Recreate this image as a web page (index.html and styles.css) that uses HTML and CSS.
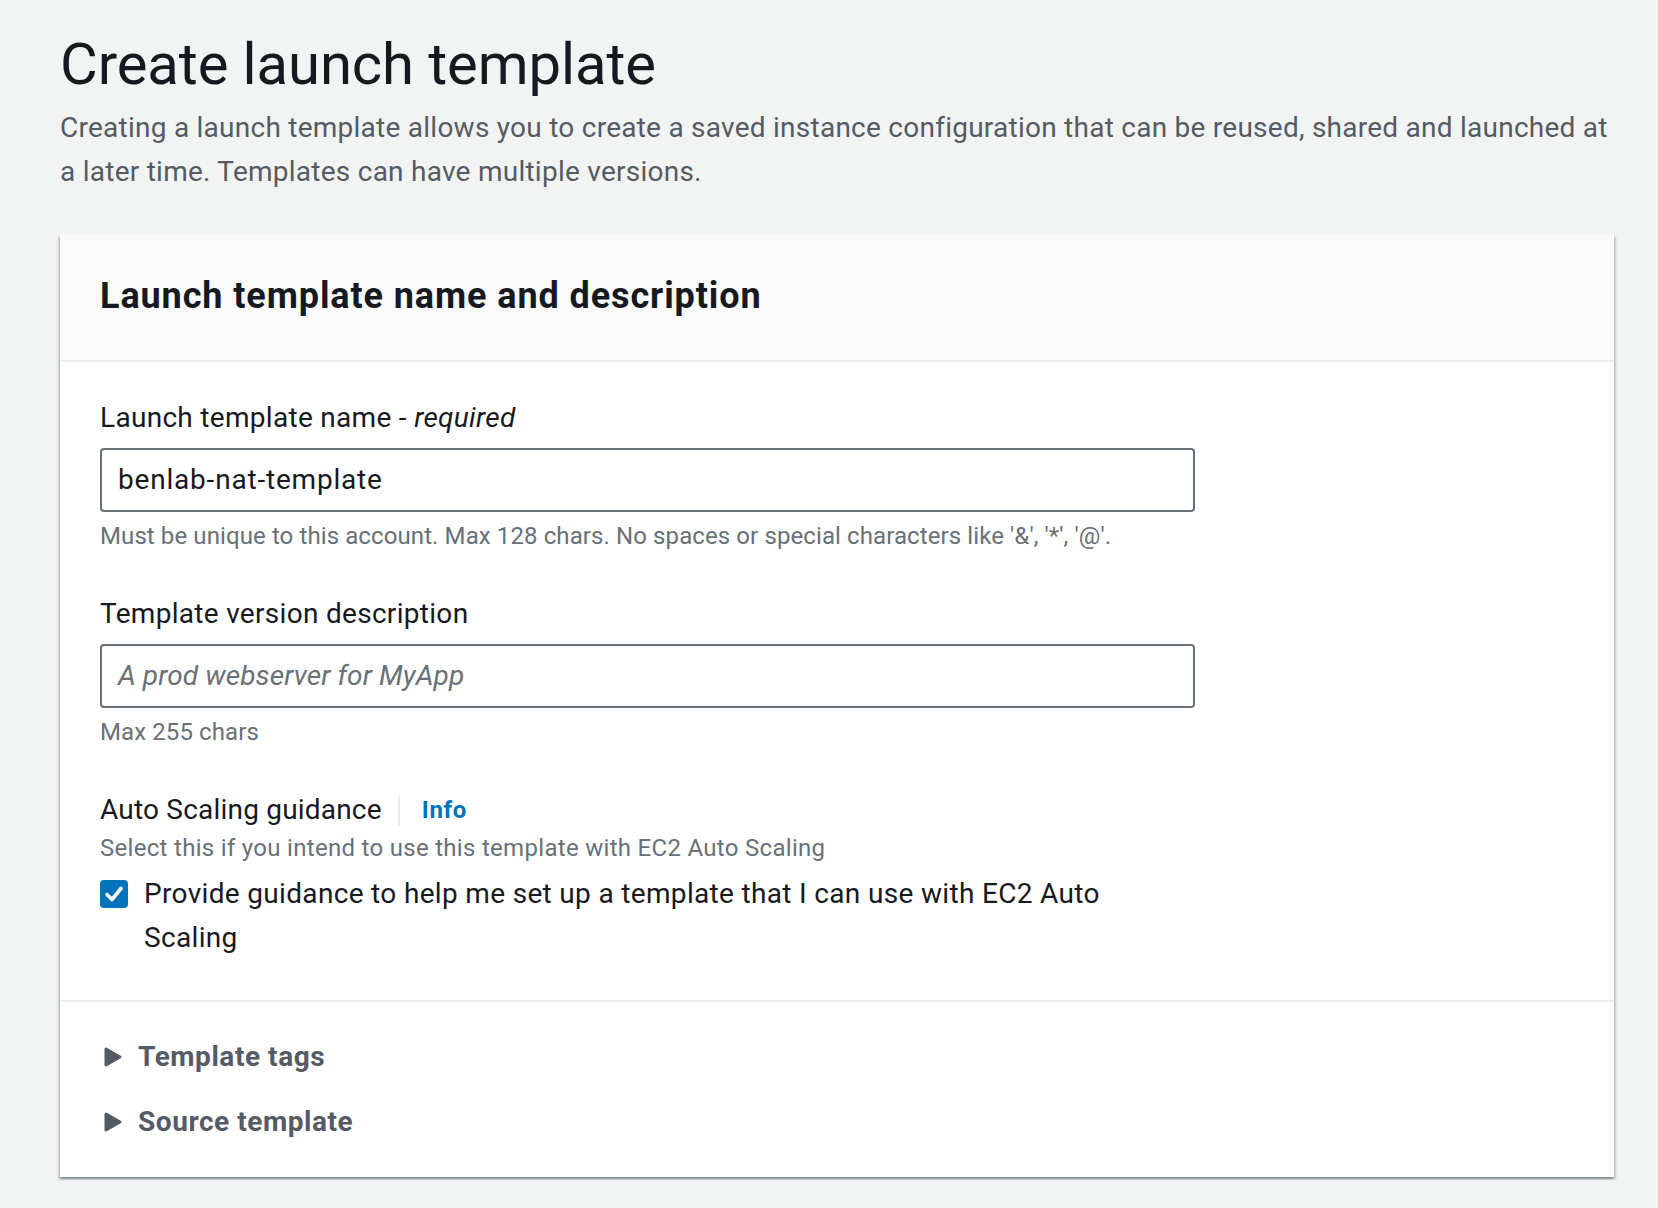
FILE: index.html
```
<!DOCTYPE html>
<html lang="en">
<head>
<meta charset="utf-8">
<title>Create launch template</title>
<link rel="stylesheet" href="styles.css">
</head>
<body>
<main class="page">
  <header class="page-header">
    <h1 class="page-title">Create launch template</h1>
    <p class="page-desc">Creating a launch template allows you to create a saved instance configuration that can be reused, shared and launched at a later time. Templates can have multiple versions.</p>
  </header>

  <section class="card">
    <div class="card-header">
      <h2 class="card-title">Launch template name and description</h2>
    </div>

    <div class="card-body">
      <div class="field">
        <div class="field-label">Launch template name - <em>required</em></div>
        <div class="input">benlab-nat-template</div>
        <div class="hint">Must be unique to this account. Max 128 chars. No spaces or special characters like '&amp;', '*', '@'.</div>
      </div>

      <div class="field">
        <div class="field-label">Template version description</div>
        <div class="input placeholder">A prod webserver for MyApp</div>
        <div class="hint">Max 255 chars</div>
      </div>

      <div class="field">
        <div class="field-label label-row">
          <span>Auto Scaling guidance</span>
          <span class="label-sep"></span>
          <span class="info-link">Info</span>
        </div>
        <div class="hint hint-tight">Select this if you intend to use this template with EC2 Auto Scaling</div>
        <div class="checkbox-row">
          <span class="checkbox">
            <svg viewBox="0 0 28 28" width="28" height="28" aria-hidden="true">
              <path d="M7 14.5 L12 19.5 L21 8.5" fill="none" stroke="#ffffff" stroke-width="3.6" stroke-linecap="round" stroke-linejoin="round"/>
            </svg>
          </span>
          <span class="checkbox-text">Provide guidance to help me set up a template that I can use with EC2 Auto Scaling</span>
        </div>
      </div>
    </div>

    <div class="card-footer">
      <div class="expander">
        <svg class="caret" viewBox="0 0 20 22" width="20" height="22" aria-hidden="true">
          <path d="M3 3 L17 11 L3 19 Z" fill="#545b64" stroke="#545b64" stroke-width="3" stroke-linejoin="round"/>
        </svg>
        <span>Template tags</span>
      </div>
      <div class="expander">
        <svg class="caret" viewBox="0 0 20 22" width="20" height="22" aria-hidden="true">
          <path d="M3 3 L17 11 L3 19 Z" fill="#545b64" stroke="#545b64" stroke-width="3" stroke-linejoin="round"/>
        </svg>
        <span>Source template</span>
      </div>
    </div>
  </section>
</main>
</body>
</html>
```

FILE: styles.css
```
* {
  box-sizing: border-box;
}

html, body {
  margin: 0;
  padding: 0;
  background: #f2f3f3;
}

body {
  font-family: Roboto, "Liberation Sans", Arial, sans-serif;
  color: #16191f;
}

.page {
  padding: 28px 44px 40px 60px;
}

.page-title {
  margin: 0;
  font-size: 58px;
  line-height: 72px;
  font-weight: 400;
  letter-spacing: -0.1px;
  color: #16191f;
}

.page-desc {
  margin: 6px 0 0 0;
  font-size: 28px;
  line-height: 44px;
  letter-spacing: 0.25px;
  color: #545b64;
}

.card {
  margin-top: 41px;
  background: #ffffff;
  box-shadow: 0 2px 2px 0 rgba(0, 28, 36, 0.3),
              2px 2px 2px 0 rgba(0, 28, 36, 0.15),
              -2px 2px 2px 0 rgba(0, 28, 36, 0.15);
}

.card-header {
  background: #fafafa;
  padding: 39px 40px 42px 40px;
  border-bottom: 2px solid #eaeded;
}

.card-title {
  margin: 0;
  font-size: 36px;
  line-height: 44px;
  font-weight: 700;
  letter-spacing: 0.9px;
  color: #16191f;
}

.card-body {
  padding: 34px 40px 40px 40px;
  border-bottom: 2px solid #eaeded;
  display: flex;
  flex-direction: column;
  gap: 40px;
}

.field {
  max-width: 1095px;
  display: flex;
  flex-direction: column;
}

.field-label {
  font-size: 28px;
  line-height: 44px;
  letter-spacing: 0.3px;
  color: #16191f;
}

.field-label em {
  font-style: italic;
}

.label-row {
  display: flex;
  align-items: center;
  letter-spacing: 0.2px;
}

.label-sep {
  width: 2px;
  height: 31px;
  background: #eaeded;
  margin: 0 22px 0 16px;
}

.info-link {
  font-size: 24px;
  font-weight: 700;
  letter-spacing: 0.6px;
  color: #0073bb;
}

.input {
  margin-top: 8px;
  height: 64px;
  border: 2px solid #687078;
  border-radius: 4px;
  padding: 0 16px;
  font-size: 28px;
  line-height: 60px;
  letter-spacing: 0.8px;
  color: #16191f;
  background: #ffffff;
}

.input.placeholder {
  color: #687078;
  font-style: italic;
  letter-spacing: 0.1px;
}

.hint {
  margin-top: 8px;
  font-size: 24px;
  line-height: 32px;
  letter-spacing: 0.1px;
  color: #687078;
}

.hint-tight {
  margin-top: 0;
  letter-spacing: 0.3px;
}

.checkbox-row {
  margin-top: 8px;
  display: flex;
  align-items: flex-start;
}

.checkbox {
  flex: none;
  width: 28px;
  height: 28px;
  margin-top: 8px;
  border-radius: 4px;
  background: #0073bb;
  display: flex;
}

.checkbox-text {
  margin-left: 16px;
  font-size: 28px;
  line-height: 44px;
  letter-spacing: 0.33px;
  color: #16191f;
  max-width: 1000px;
}

.card-footer {
  padding: 33px 40px 33px 40px;
  display: flex;
  flex-direction: column;
  gap: 21px;
}

.expander {
  display: flex;
  align-items: center;
  font-size: 28px;
  line-height: 44px;
  font-weight: 700;
  letter-spacing: 0.55px;
  color: #545b64;
}

.caret {
  margin-left: 3px;
  margin-right: 15px;
  flex: none;
}
```
